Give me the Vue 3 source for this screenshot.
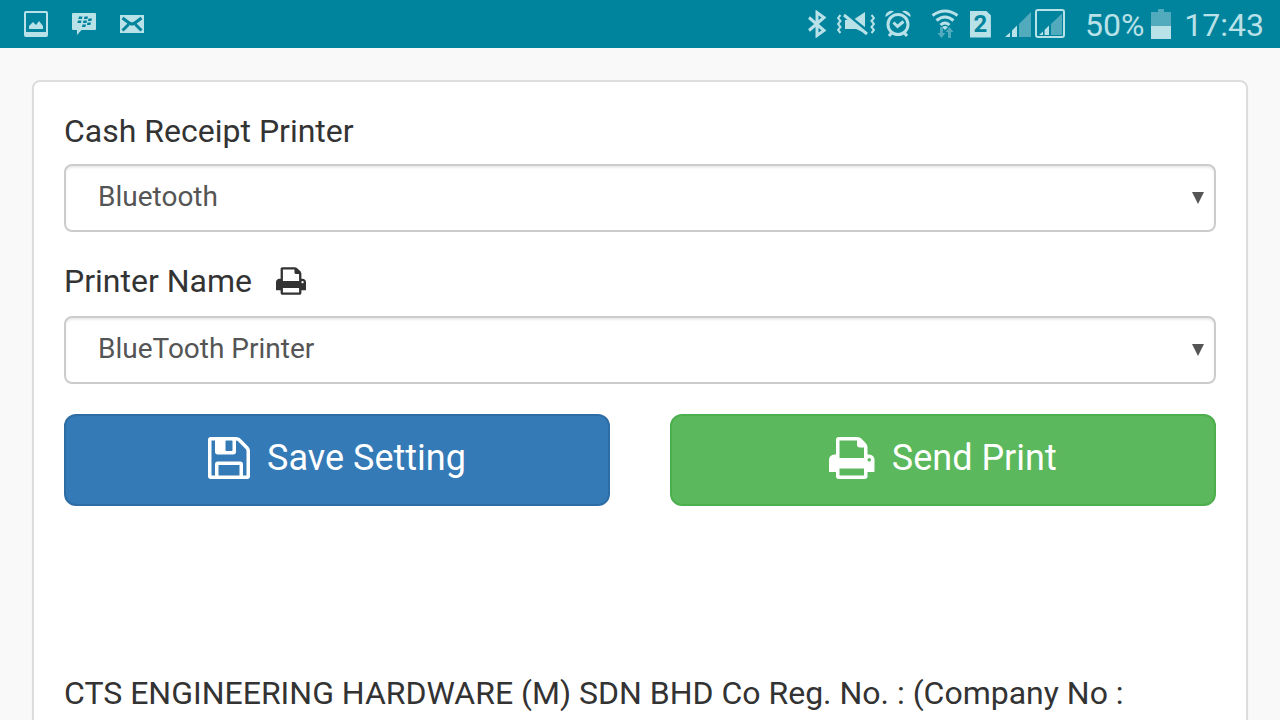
<template>
  <header class="status-bar">
    <div class="status-group notifications">
      <svg class="status-icon" width="24" height="26" viewBox="0 0 24 26" aria-hidden="true">
        <path fill-rule="evenodd" d="M2 0h20q2 0 2 2v22q0 2-2 2H2q-2 0-2-2V2Q0 0 2 0zm0 2v19h20V2z" />
        <path d="M5 18v-3l4-4 3 3 3-4 4 5v3z" />
      </svg>
      <svg class="status-icon" width="24" height="22" viewBox="0 0 24 22" aria-hidden="true">
        <path d="M1 0h22q1 0 1 1v15q0 1-1 1H9.500L5 22v-5H1q-1 0-1-1V1q0-1 1-1z" />
        <path class="cutout" d="M7 3.500h3.500l-.6 2.500H6.400zM12.500 3.500H16l-.6 2.500h-3.500zM6 7.500h3.500L8.900 10H5.400zM11.500 7.500H15l-.6 2.500h-3.500zM16.500 5.500H20L19.400 8h-3.500zM15.500 9.500H19l-.6 2.500h-3.500zM10.500 11.500H14l-.6 2.500H9.900z" />
      </svg>
      <svg class="status-icon" width="24" height="18" viewBox="0 0 24 18" aria-hidden="true">
        <path d="M0 0h24v18H0z" />
        <path class="cutout-line" d="M2.500 3l6 4.500q3.500 3 7 0l6-4.500M2.500 15.500l6-6M21.500 15.500l-6-6" />
      </svg>
    </div>

    <div class="status-group system">
      <svg class="status-icon bluetooth" width="20" height="28" viewBox="0 0 20 28" aria-hidden="true">
        <path class="line" d="M2 7.500l15 13-7 5V2.500l7 5-15 13" />
      </svg>
      <svg class="status-icon muted" width="38" height="28" viewBox="0 0 38 28" aria-hidden="true">
        <path d="M8 10h8l12-8v21l-9-4H8z" />
        <path class="cutout-line wide" d="M7 3l24 19" />
        <path class="line" d="M7 5l23 19" />
        <path class="line thin" d="M3.500 5L1 8l2.500 3L1 14l2.500 3L1 20l2.500 3M34.500 5L37 8l-2.500 3 2.500 3-2.500 3 2.500 3-2.500 3" />
      </svg>
      <svg class="status-icon alarm" width="26" height="28" viewBox="0 0 26 28" aria-hidden="true">
        <circle class="line" cx="13" cy="14.500" r="10" />
        <path class="line" d="M8.500 12.500l4 4 6-5M6.500 23l-2.500 3M19.500 23l2.500 3" />
        <path d="M.5 7Q0 4 3 2t6-.5zM25.500 7q.5-3-2.500-5t-6-.5z" />
      </svg>
      <svg class="status-icon wifi" width="28" height="30" viewBox="0 0 28 30" aria-hidden="true">
        <path class="line" d="M1.500 6.500q12.500-9 25 0M5.500 11.500q8.500-7 17 0M9.500 16q4.500-4 9 0" />
        <path d="M14 21l-3-3q3-2 6 0z" />
        <path class="dim" d="M9 18h3v6h2.500L10.500 29l-4-5H9zM17 29v-6h-2.500l4-5 4 5H20v6z" />
      </svg>
      <span class="sim">2</span>
      <svg class="status-icon signal" width="60" height="30" viewBox="0 0 60 30" aria-hidden="true">
        <path class="dim" d="M14 15L26 3v25H14z" />
        <path d="M0 28l5-4.500V28zM7 28v-6.500l5-5V28z" />
        <rect class="frame" x="31" y="1" width="28" height="27" rx="2" />
        <path class="dim" d="M46 15L57 4.500V26H46z" />
        <path d="M34 26l4-3.500V26zM39.500 26v-5l4.500-4.500V26z" />
      </svg>
      <span class="status-text battery-level">50%</span>
      <svg class="status-icon battery" width="20" height="30" viewBox="0 0 20 30" aria-hidden="true">
        <path class="dim" d="M7 0h6v3h7v14H0V3h7z" />
        <path d="M0 17h20v13H0z" />
      </svg>
      <time class="status-text clock">17:43</time>
    </div>
  </header>

  <main class="page">
    <form class="panel" @submit.prevent="saveSetting">
      <div class="form-group">
        <label for="printer-type">Cash Receipt Printer</label>
        <div class="select-wrap">
          <select id="printer-type" v-model="printerType">
            <option>Bluetooth</option>
          </select>
          <svg class="arrow" viewBox="0 0 12 12" aria-hidden="true">
            <path d="M0 0h12L6 12z" />
          </svg>
        </div>
      </div>

      <div class="form-group">
        <label for="printer-name" class="with-icon">
          Printer Name
          <svg class="label-icon" viewBox="64 128 1664 1536" aria-hidden="true">
            <path :d="printIcon" />
          </svg>
        </label>
        <div class="select-wrap">
          <select id="printer-name" v-model="printerName">
            <option>BlueTooth Printer</option>
          </select>
          <svg class="arrow" viewBox="0 0 12 12" aria-hidden="true">
            <path d="M0 0h12L6 12z" />
          </svg>
        </div>
      </div>

      <div class="actions">
        <button type="submit" class="btn btn-primary">
          <svg class="btn-icon" viewBox="128 128 1536 1536" aria-hidden="true">
            <path :d="saveIcon" />
          </svg>
          Save Setting
        </button>
        <button type="button" class="btn btn-success">
          <svg class="btn-icon" viewBox="64 128 1664 1536" aria-hidden="true">
            <path :d="printIcon" />
          </svg>
          Send Print
        </button>
      </div>

      <p class="receipt">CTS ENGINEERING HARDWARE (M) SDN BHD Co Reg. No. : (Company No :</p>
    </form>
  </main>
</template>

<script setup>
import { ref } from 'vue'

const printerType = ref('Bluetooth')
const printerName = ref('BlueTooth Printer')

const printIcon =
  'M448 1536h896v-256h-896v256zm0-640h896v-384h-160q-40 0-68-28t-28-68v-160h-640v640zm1152 64q0-26-19-45t-45-19-45 19-19 45 19 45 45 19 45-19 19-45zm128 0v416q0 13-9.500 22.500t-22.500 9.500h-224v160q0 40-28 68t-68 28h-960q-40 0-68-28t-28-68v-160h-224q-13 0-22.500-9.500t-9.500-22.500v-416q0-79 56.500-135.500t135.500-56.500h64v-544q0-40 28-68t68-28h672q40 0 88 20t76 48l152 152q28 28 48 76t20 88v256h64q79 0 135.500 56.500t56.500 135.500z'

const saveIcon =
  'M512 1536h768v-384h-768v384zm896 0h128v-896q0-14-10-38.500t-20-34.500l-281-281q-10-10-34-20t-39-10v416q0 40-28 68t-68 28h-576q-40 0-68-28t-28-68v-416h-128v1280h128v-416q0-40 28-68t68-28h832q40 0 68 28t28 68v416zm-384-928v-320q0-13-9.500-22.500t-22.500-9.500h-192q-13 0-22.500 9.500t-9.500 22.500v320q0 13 9.500 22.500t22.500 9.500h192q13 0 22.500-9.500t9.500-22.500zm640 32v928q0 40-28 68t-68 28h-1344q-40 0-68-28t-28-68v-1344q0-40 28-68t68-28h928q40 0 88 20t76 48l280 280q28 28 48 76t20 88z'

const saveSetting = () => {
  localStorage.setItem(
    'printer',
    JSON.stringify({ type: printerType.value, name: printerName.value })
  )
}
</script>

<style>
body {
  margin: 0;
  background: #f9f9f9;
}
</style>

<style scoped>
.status-bar {
  display: flex;
  align-items: center;
  justify-content: space-between;
  height: 48px;
  padding: 0 16px 0 24px;
  background: #00839d;
  color: #b8e1e8;
  font-family: Roboto, sans-serif;
}

.status-group {
  display: flex;
  align-items: center;
}

.notifications {
  gap: 24px;
}

.status-icon {
  flex: none;
  fill: #b8e1e8;
}

.cutout {
  fill: #00839d;
}

.cutout-line {
  fill: none;
  stroke: #00839d;
  stroke-width: 3;
}

.cutout-line.wide {
  stroke-width: 4;
}

.line {
  fill: none;
  stroke: #b8e1e8;
  stroke-width: 3;
}

.line.thin {
  stroke-width: 2;
}

.dim {
  fill: #52abbd;
}

.frame {
  fill: none;
  stroke: #b8e1e8;
  stroke-width: 2;
}

.muted {
  margin-left: 10px;
}

.alarm {
  margin-left: 10px;
}

.wifi {
  margin-left: 20px;
}

.sim {
  width: 21px;
  height: 27px;
  margin-left: 11px;
  background: #b8e1e8;
  clip-path: polygon(0 0, 76% 0, 100% 18%, 100% 100%, 0 100%);
  color: #00839d;
  font-size: 24px;
  font-weight: 700;
  line-height: 27px;
  text-align: center;
}

.signal {
  margin-left: 14px;
}

.status-text {
  padding-top: 2px;
  font-size: 32px;
  line-height: 48px;
}

.battery-level {
  margin-left: 20px;
}

.battery {
  margin-left: 7px;
}

.clock {
  margin-left: 13px;
}

.page {
  padding: 32px;
  font-family: Roboto, sans-serif;
  color: #333;
}

.panel {
  padding: 26px 30px 30px;
  border: 2px solid #ddd;
  border-radius: 8px;
  background: #fff;
  box-shadow: 0 2px 2px rgba(0, 0, 0, 0.05);
}

.form-group {
  margin-bottom: 26px;
}

.form-group label {
  display: flex;
  align-items: center;
  gap: 24px;
  margin-bottom: 10px;
  font-size: 32px;
  line-height: 46px;
}

.form-group .with-icon {
  margin-bottom: 12px;
}

.label-icon {
  width: 30px;
  height: 28px;
  fill: #333;
}

.select-wrap {
  position: relative;
}

select {
  display: block;
  box-sizing: border-box;
  width: 100%;
  height: 68px;
  padding: 0 32px 4px;
  border: 2px solid #ccc;
  border-radius: 8px;
  appearance: none;
  background: #fff;
  box-shadow: inset 0 2px 2px rgba(0, 0, 0, 0.075);
  color: #555;
  font-family: inherit;
  font-size: 28px;
}

.arrow {
  position: absolute;
  top: 28px;
  right: 12px;
  width: 12px;
  height: 12px;
  fill: #555;
  pointer-events: none;
}

.actions {
  display: grid;
  grid-template-columns: 1fr 1fr;
  gap: 60px;
  margin-top: 30px;
}

.btn {
  display: flex;
  align-items: center;
  justify-content: center;
  gap: 17px;
  height: 92px;
  padding: 0 32px 5px;
  border: 2px solid;
  border-radius: 12px;
  color: #fff;
  font-family: inherit;
  font-size: 36px;
  cursor: pointer;
}

.btn-primary {
  border-color: #2e6da4;
  background: #337ab7;
}

.btn-success {
  border-color: #4cae4c;
  background: #5cb85c;
}

.btn-icon {
  height: 42px;
  fill: #fff;
}

.receipt {
  margin: 167px 0 0;
  font-size: 32px;
  line-height: 40px;
}
</style>
